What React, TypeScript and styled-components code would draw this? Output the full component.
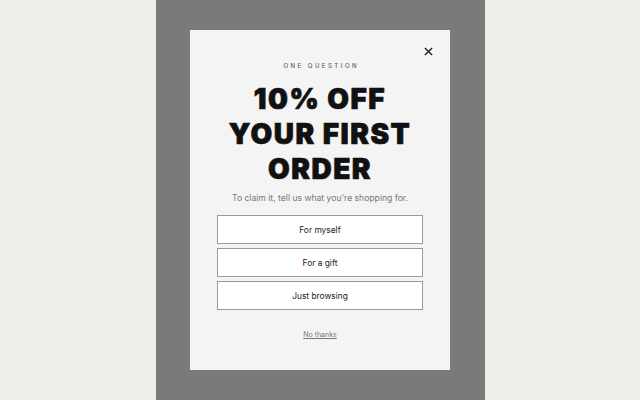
import React from 'react';
import styled, { createGlobalStyle } from 'styled-components';

const GlobalStyle = createGlobalStyle`
  html, body {
    margin: 0;
    padding: 0;
    background: #efeee9;
  }
  body {
    font-family: Inter, "Liberation Sans", sans-serif;
  }
`;

const Backdrop = styled.div`
  width: 329px;
  height: 400px;
  margin: 0 auto;
  padding-top: 30px;
  box-sizing: border-box;
  background: #7a7a78;
`;

const Modal = styled.div`
  position: relative;
  width: 260px;
  height: 340px;
  margin: 0 auto;
  box-sizing: border-box;
  padding: 32px 27px 0;
  background: #f4f4f4;
  display: flex;
  flex-direction: column;
  align-items: center;
`;

const CloseButton = styled.button`
  position: absolute;
  top: 15px;
  right: 16px;
  width: 12px;
  height: 12px;
  padding: 0;
  border: 0;
  background: transparent;
  cursor: pointer;
  display: flex;
  align-items: center;
  justify-content: center;
`;

const Eyebrow = styled.div`
  font-size: 6px;
  line-height: 8px;
  font-weight: 500;
  letter-spacing: 2.5px;
  color: #5e5e5e;
  margin-right: -2.5px;
`;

const Headline = styled.h1`
  margin: 12px 0 0;
  font-family: Inter, "Liberation Sans", sans-serif;
  font-weight: 900;
  font-size: 28px;
  line-height: 35px;
  letter-spacing: 1.5px;
  -webkit-text-stroke: 0.7px #111;
  color: #111;
  text-align: center;
`;

const Subtitle = styled.p`
  margin: 5px 0 0;
  font-size: 8.6px;
  line-height: 12px;
  color: #777;
`;

const Options = styled.div`
  width: 100%;
  display: flex;
  flex-direction: column;
  gap: 4px;
  margin-top: 11px;
`;

const OptionButton = styled.button`
  height: 29px;
  width: 100%;
  border: 1px solid #9a9a9a;
  background: #fff;
  font-family: Inter, "Liberation Sans", sans-serif;
  font-size: 8.4px;
  color: #222;
  cursor: pointer;
`;

const NoThanks = styled.a`
  margin-top: 20px;
  font-size: 7px;
  color: #777;
  text-decoration: underline;
  cursor: pointer;
`;

const OPTIONS = ['For myself', 'For a gift', 'Just browsing'];

export default function App() {
  return (
    <>
      <GlobalStyle />
      <Backdrop>
        <Modal>
          <CloseButton aria-label="Close">
            <svg width="9" height="9" viewBox="0 0 10 10">
              <path d="M1 1L9 9M9 1L1 9" stroke="#222" strokeWidth="1.6" />
            </svg>
          </CloseButton>
          <Eyebrow>ONE QUESTION</Eyebrow>
          <Headline>
            10% OFF
            <br />
            YOUR FIRST
            <br />
            ORDER
          </Headline>
          <Subtitle>To claim it, tell us what you're shopping for.</Subtitle>
          <Options>
            {OPTIONS.map(option => (
              <OptionButton key={option}>{option}</OptionButton>
            ))}
          </Options>
          <NoThanks>No thanks</NoThanks>
        </Modal>
      </Backdrop>
    </>
  );
}
